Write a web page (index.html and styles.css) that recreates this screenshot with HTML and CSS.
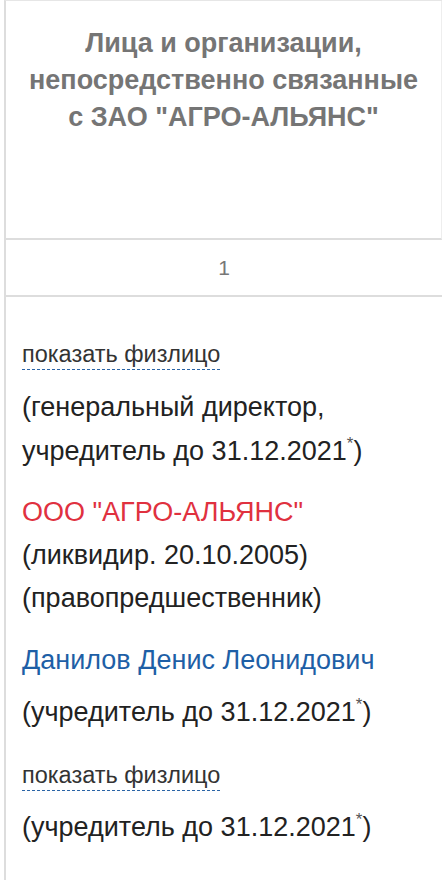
FILE: index.html
```
<!DOCTYPE html>
<html lang="ru">
<head>
<meta charset="utf-8">
<link rel="stylesheet" href="styles.css">
</head>
<body>
<div class="table">
  <div class="head-cell">Лица и организации, непосредственно связанные с ЗАО "АГРО-АЛЬЯНС"</div>
  <div class="num-cell">1</div>
  <div class="body-cell">
    <div class="entry e1">
      <div class="line link-line"><span class="dlink">показать физлицо</span></div>
      <div class="role">(генеральный директор,<br>учредитель до 31.12.2021<sup>*</sup>)</div>
    </div>
    <div class="entry e2">
      <div class="line red">ООО "АГРО-АЛЬЯНС"</div>
      <div class="line">(ликвидир. 20.10.2005)</div>
      <div class="line">(правопредшественник)</div>
    </div>
    <div class="entry e3">
      <div class="line blue">Данилов Денис Леонидович</div>
      <div class="role r2">(учредитель до 31.12.2021<sup>*</sup>)</div>
    </div>
    <div class="entry e4">
      <div class="line link-line"><span class="dlink">показать физлицо</span></div>
      <div class="role r2">(учредитель до 31.12.2021<sup>*</sup>)</div>
    </div>
  </div>
</div>
</body>
</html>
```
FILE: styles.css
```
html, body {
  margin: 0;
  padding: 0;
  background: #fff;
}
body {
  font-family: "Liberation Sans", Arial, sans-serif;
  color: #222;
  overflow: hidden;
}
.table {
  margin-left: 4px;
  width: 436px;
  border-left: 2px solid #dddddd;
  border-top: 1px solid #e6e6e6;
  min-height: 880px;
}
.head-cell {
  padding: 24px 14px 0;
  box-sizing: content-box;
  height: 213px;
  border-right: 1px solid #eeeeee;
  border-bottom: 2px solid #dddddd;
  text-align: center;
  font-weight: bold;
  font-size: 27px;
  line-height: 37px;
  color: #757575;
}
.num-cell {
  height: 55px;
  line-height: 55px;
  text-align: center;
  font-size: 21px;
  color: #777;
  border-bottom: 2px solid #dddddd;
}
.body-cell {
  padding: 0 0 0 16px;
  font-size: 27px;
}
.line {
  line-height: 43px;
}
.link-line {
  line-height: 42px;
  font-size: 23.5px;
}
.dlink {
  color: #333;
  border-bottom: 1px dashed #2a64a6;
  padding-bottom: 2px;
}
.role {
  line-height: 44px;
}
.role sup {
  font-size: 17px;
  line-height: 0;
  vertical-align: 11px;
  color: #555;
}
.red { color: #e0313f; }
.blue { color: #1e5fa6; }
.e1 { padding-top: 36px; }
.e1 .role { margin-top: 10px; }
.e2 { padding-top: 18px; }
.e3 { padding-top: 19px; }
.e3 .r2 { margin-top: 8px; }
.e4 .r2 { margin-top: 9px; }
.e4 { padding-top: 20px; }
```
